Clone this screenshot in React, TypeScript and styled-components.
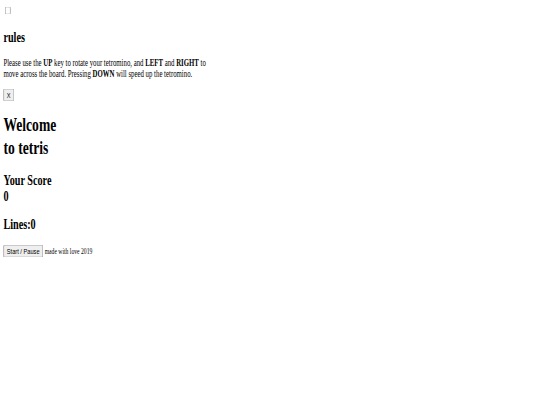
import React from "react";
import styled, { createGlobalStyle } from "styled-components";

const Global = createGlobalStyle`
  html, body {
    margin: 0;
    padding: 0;
    background: #ffffff;
    overflow: hidden;
  }
  body {
    font-family: "Liberation Serif", "Times New Roman", serif;
    color: #000000;
  }
`;

const Viewport = styled.div`
  width: 100vw;
  height: 100vh;
  overflow: hidden;
`;

const Stage = styled.div`
  width: 1270px;
  padding: 8px;
  box-sizing: border-box;
  transform: scale(0.425, 0.603);
  transform-origin: 0 0;
  font-family: "Liberation Serif", "Times New Roman", serif;
  font-size: 16px;
`;

const ToggleRow = styled.div``;

const Toggle = styled.input``;

const RulesPanel = styled.div`
  width: 500px;
`;

const RulesTitle = styled.h2`
  font-size: 24px;
  margin: 0.83em 0;
`;

const RulesText = styled.p`
  margin: 1em 0;
`;

const Key = styled.b``;

const Button = styled.button`
  font-family: "Liberation Sans", Arial, sans-serif;
  font-size: 13.333px;
`;

const Title = styled.h1`
  font-size: 32px;
  margin: 0.67em 0;
`;

const Stat = styled.h2`
  font-size: 24px;
  margin: 0.83em 0;
`;

const Footer = styled.div``;

const Credit = styled.small`
  font-size: 13.333px;
  margin-left: 4px;
`;

export default function App() {
  return (
    <>
      <Global />
      <Viewport>
        <Stage>
          <ToggleRow>
            <Toggle type="checkbox" />
          </ToggleRow>
          <RulesPanel>
            <RulesTitle>rules</RulesTitle>
            <RulesText>
              Please use the <Key>UP</Key> key to rotate your tetromino, and{" "}
              <Key>LEFT</Key> and <Key>RIGHT</Key> to move across the board.
              Pressing <Key>DOWN</Key> will speed up the tetromino.
            </RulesText>
            <Button>X</Button>
          </RulesPanel>
          <Title>
            Welcome
            <br />
            to tetris
          </Title>
          <Stat>
            Your Score
            <br />0
          </Stat>
          <Stat>Lines:0</Stat>
          <Footer>
            <Button>Start / Pause</Button>
            <Credit>made with love 2019</Credit>
          </Footer>
        </Stage>
      </Viewport>
    </>
  );
}
